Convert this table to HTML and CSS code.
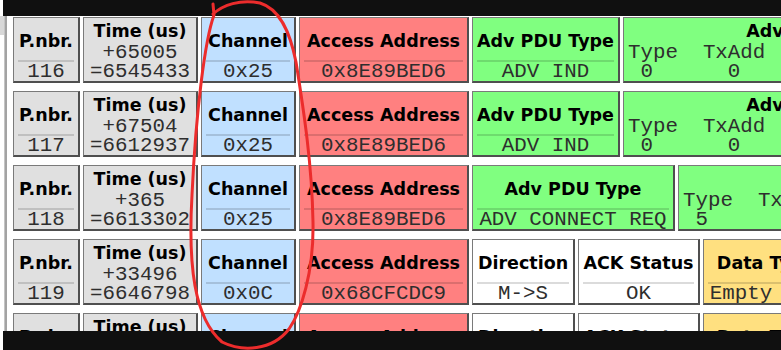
FILE: index.html
```html
<!DOCTYPE html>
<html>
<head>
<meta charset="utf-8">
<link rel="stylesheet" href="styles.css">
</head>
<body>
<div class="topbar"></div>
<div class="main">
  <div class="gutter"><div class="track"><div class="thumb"></div></div><div class="rail"></div></div>
  <div class="rows">
    <div class="row">
      <div class="cell gray w-pnbr"><div class="hd">P.nbr.</div><div class="sep"></div><div class="val">116</div></div>
      <div class="cell gray w-time tall"><div class="hd">Time (us)</div><div class="sep"></div><div class="val">+65005</div><div class="val">=6545433</div></div>
      <div class="cell blue w-chan"><div class="hd">Channel</div><div class="sep"></div><div class="val">0x25</div></div>
      <div class="cell red w-addr"><div class="hd">Access Address</div><div class="sep"></div><div class="val">0x8E89BED6</div></div>
      <div class="cell green w-pdu"><div class="hd">Adv PDU Type</div><div class="sep"></div><div class="val">ADV IND</div></div>
      <div class="cell green w-hdr tall"><div class="hd">Adv PDU Header</div><div class="sep"></div><div class="val left">Type  TxAdd  RxAdd  Length</div><div class="val left"> 0      0      0       37</div></div>
    </div>
    <div class="row">
      <div class="cell gray w-pnbr"><div class="hd">P.nbr.</div><div class="sep"></div><div class="val">117</div></div>
      <div class="cell gray w-time tall"><div class="hd">Time (us)</div><div class="sep"></div><div class="val">+67504</div><div class="val">=6612937</div></div>
      <div class="cell blue w-chan"><div class="hd">Channel</div><div class="sep"></div><div class="val">0x25</div></div>
      <div class="cell red w-addr"><div class="hd">Access Address</div><div class="sep"></div><div class="val">0x8E89BED6</div></div>
      <div class="cell green w-pdu"><div class="hd">Adv PDU Type</div><div class="sep"></div><div class="val">ADV IND</div></div>
      <div class="cell green w-hdr tall"><div class="hd">Adv PDU Header</div><div class="sep"></div><div class="val left">Type  TxAdd  RxAdd  Length</div><div class="val left"> 0      0      0       37</div></div>
    </div>
    <div class="row">
      <div class="cell gray w-pnbr"><div class="hd">P.nbr.</div><div class="sep"></div><div class="val">118</div></div>
      <div class="cell gray w-time tall"><div class="hd">Time (us)</div><div class="sep"></div><div class="val">+365</div><div class="val">=6613302</div></div>
      <div class="cell blue w-chan"><div class="hd">Channel</div><div class="sep"></div><div class="val">0x25</div></div>
      <div class="cell red w-addr"><div class="hd">Access Address</div><div class="sep"></div><div class="val">0x8E89BED6</div></div>
      <div class="cell green w-pdu-wide"><div class="hd">Adv PDU Type</div><div class="sep"></div><div class="val">ADV CONNECT REQ</div></div>
      <div class="cell green w-hdr tall"><div class="hd">Adv PDU Header</div><div class="sep"></div><div class="val left">Type  TxAdd  RxAdd  Length</div><div class="val left"> 5      0      0       34</div></div>
    </div>
    <div class="row">
      <div class="cell gray w-pnbr"><div class="hd">P.nbr.</div><div class="sep"></div><div class="val">119</div></div>
      <div class="cell gray w-time tall"><div class="hd">Time (us)</div><div class="sep"></div><div class="val">+33496</div><div class="val">=6646798</div></div>
      <div class="cell blue w-chan"><div class="hd">Channel</div><div class="sep"></div><div class="val">0x0C</div></div>
      <div class="cell red w-addr"><div class="hd">Access Address</div><div class="sep"></div><div class="val">0x68CFCDC9</div></div>
      <div class="cell white w-dir"><div class="hd">Direction</div><div class="sep"></div><div class="val">M-&gt;S</div></div>
      <div class="cell white w-ack"><div class="hd">ACK Status</div><div class="sep"></div><div class="val">OK</div></div>
      <div class="cell yellow w-data"><div class="hd">Data Type</div><div class="sep"></div><div class="val">Empty PDU</div></div>
    </div>
    <div class="row">
      <div class="cell gray w-pnbr"><div class="hd">P.nbr.</div><div class="sep"></div><div class="val">120</div></div>
      <div class="cell gray w-time tall"><div class="hd">Time (us)</div><div class="sep"></div><div class="val">+625</div><div class="val">=6647423</div></div>
      <div class="cell blue w-chan"><div class="hd">Channel</div><div class="sep"></div><div class="val">0x0C</div></div>
      <div class="cell red w-addr"><div class="hd">Access Address</div><div class="sep"></div><div class="val">0x68CFCDC9</div></div>
      <div class="cell white w-dir"><div class="hd">Direction</div><div class="sep"></div><div class="val">S-&gt;M</div></div>
      <div class="cell white w-ack"><div class="hd">ACK Status</div><div class="sep"></div><div class="val">OK</div></div>
      <div class="cell yellow w-data"><div class="hd">Data Type</div><div class="sep"></div><div class="val">Empty PDU</div></div>
    </div>
  </div>
</div>
<div class="bottombar"></div>
<svg class="mark" viewBox="0 0 781 350" width="781" height="350" aria-hidden="true">
  <path d="M213,4 L214,15 C205,40 196,110 192,195 C188,265 194,318 222,342 C242,352 272,351 289,329 C301,312 314,272 313,222 C312,165 304,112 296,62 C290,32 280,9 260,3 C240,-1 223,5 213,14" fill="none" stroke="#ec2c2c" stroke-width="3" stroke-linecap="round" stroke-linejoin="round"/>
</svg>
</body>
</html>
```

FILE: styles.css
```css
html, body {
  margin: 0;
  padding: 0;
  background: #ffffff;
  overflow: hidden;
  width: 781px;
  height: 350px;
}

.topbar {
  height: 16px;
  margin-left: 3px;
  background: #101010;
}

.bottombar {
  position: fixed;
  left: 3px;
  right: 0;
  bottom: 0;
  height: 19px;
  background: #101010;
}

.main {
  display: flex;
  height: 334px;
  overflow: hidden;
}

.gutter {
  flex: none;
  width: 13px;
  display: flex;
}

.track {
  width: 4px;
}

.thumb {
  height: 19px;
  background: #d8d8d8;
}

.rail {
  width: 3px;
  background: #a3a3a3;
  border-left: 1px solid #c4c4c4;
  box-sizing: border-box;
}

.rows {
  flex: 1;
  min-width: 0;
  padding-top: 1px;
  display: flex;
  flex-direction: column;
  gap: 8px;
  overflow: hidden;
}

.row {
  display: flex;
  gap: 3px;
}

.cell {
  flex: none;
  box-sizing: border-box;
  height: 66px;
  border-style: solid;
  border-width: 1px 2px 2px 1px;
  border-color: #7a7a7a #4f4f4f #4f4f4f #7a7a7a;
  display: flex;
  flex-direction: column;
  overflow: hidden;
}

.hd {
  flex: 1;
  display: flex;
  align-items: center;
  justify-content: center;
  padding-top: 3px;
  font-family: "DejaVu Sans", Verdana, sans-serif;
  font-weight: bold;
  font-size: 17.5px;
  color: #000;
  white-space: nowrap;
}

.sep {
  height: 2px;
  margin: 0 4px;
  background: rgba(0, 0, 0, 0.14);
}

.tall .sep {
  margin-bottom: 2px;
}

.val {
  font-family: "Liberation Mono", "Courier New", monospace;
  font-size: 20.8px;
  line-height: 19px;
  height: 19px;
  text-align: center;
  white-space: pre;
  color: #2e2e2e;
}

.val.left {
  text-align: left;
  padding-left: 4px;
}

.gray { background: #e0e0e0; }
.blue { background: #c0e0ff; }
.red { background: #ff8080; }
.green { background: #80ff80; }
.white { background: #ffffff; }
.yellow { background: #ffe080; }

.w-pnbr { width: 67px; }
.w-time { width: 115px; }
.w-chan { width: 95px; }
.w-addr { width: 170px; }
.w-pdu { width: 148px; }
.w-pdu-wide { width: 203px; }
.w-hdr { width: 410px; }
.w-dir { width: 103px; }
.w-ack { width: 122px; }
.w-data { width: 127px; }

.mark {
  position: fixed;
  left: 0;
  top: 0;
  pointer-events: none;
}
```
